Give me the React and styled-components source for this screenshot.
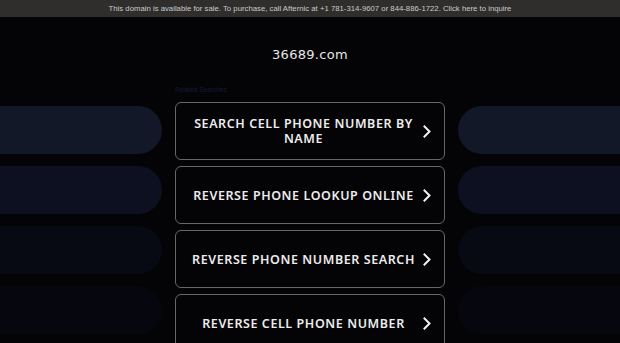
import React from 'react'
import styled, { createGlobalStyle } from 'styled-components'

const Global = createGlobalStyle`
  html, body {
    margin: 0;
    padding: 0;
    background: #040407;
    overflow: hidden;
  }
`

const Page = styled.div`
  width: 620px;
  height: 343px;
  overflow: hidden;
  background: #040407;
  font-family: "Noto Sans", "DejaVu Sans", sans-serif;
`

const SaleBar = styled.div`
  height: 17px;
  background: #302e2c;
  color: #c9c9c9;
  font-family: "Liberation Sans", Arial, sans-serif;
  font-size: 7.75px;
  line-height: 17px;
  text-align: center;
  white-space: nowrap;
`

const Title = styled.h1`
  margin: 29px 0 0;
  height: 17px;
  color: #e6e6e6;
  font-family: "DejaVu Sans", sans-serif;
  font-weight: 400;
  font-size: 13px;
  line-height: 17px;
  text-align: center;
  letter-spacing: 0.3px;
`

const Main = styled.div`
  margin-top: 21px;
  display: grid;
  grid-template-columns: 162px 270px 162px;
  column-gap: 13px;
`

const PillColumn = styled.div`
  padding-top: 22px;
  display: flex;
  flex-direction: column;
  gap: 12px;
`

const Pill = styled.div`
  height: 48px;
  background: ${p => p.$bg};
  border-radius: ${p => (p.$side === 'left' ? '0 24px 24px 0' : '24px 0 0 24px')};
`

const Center = styled.div`
  display: flex;
  flex-direction: column;
`

const Related = styled.div`
  height: 11px;
  margin-bottom: 7px;
  color: #151a33;
  font-family: "Liberation Sans", Arial, sans-serif;
  font-size: 6.5px;
  line-height: 11px;
`

const List = styled.div`
  display: flex;
  flex-direction: column;
  gap: 6px;
`

const Button = styled.a`
  box-sizing: border-box;
  height: 58px;
  border: 1.5px solid #676767;
  border-radius: 6px;
  display: flex;
  align-items: center;
  padding: 0 13px 0 12px;
  color: #ececec;
  text-decoration: none;
`

const Label = styled.span`
  flex: 1;
  text-align: center;
  font-weight: 600;
  font-size: 12.5px;
  line-height: 15px;
  letter-spacing: 0.58px;
  padding-right: 4px;
`

const Chevron = () => (
  <svg width="8" height="13" viewBox="0 0 8 13" fill="none">
    <polyline points="1.5,1.5 6.5,6.5 1.5,11.5" stroke="#f2f2f2" strokeWidth="2" strokeLinecap="square" />
  </svg>
)

const pills = ['#131829', '#0d1020', '#070913', '#05060e']

const searches = [
  'Search Cell Phone Number By Name',
  'Reverse Phone Lookup Online',
  'Reverse Phone Number Search',
  'Reverse Cell Phone Number',
]

export default function App() {
  return (
    <Page>
      <Global />
      <SaleBar>
        This domain is available for sale. To purchase, call Afternic at +1 781-314-9607 or 844-886-1722. Click here to inquire
      </SaleBar>
      <Title>36689.com</Title>
      <Main>
        <PillColumn>
          {pills.map(c => <Pill key={c} $bg={c} $side="left" />)}
        </PillColumn>
        <Center>
          <Related>Related Searches</Related>
          <List>
            {searches.map(s => (
              <Button key={s} href="#">
                <Label>{s.toUpperCase()}</Label>
                <Chevron />
              </Button>
            ))}
          </List>
        </Center>
        <PillColumn>
          {pills.map(c => <Pill key={c} $bg={c} $side="right" />)}
        </PillColumn>
      </Main>
    </Page>
  )
}
